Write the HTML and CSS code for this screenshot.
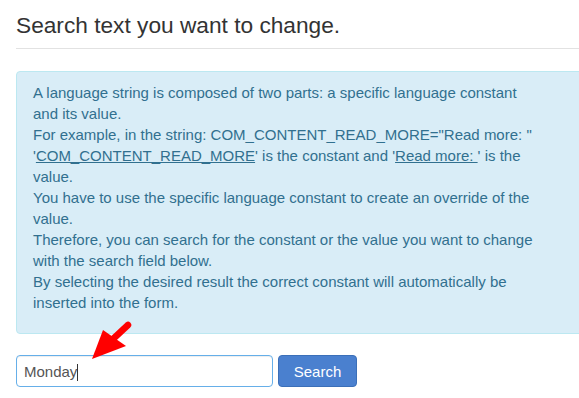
FILE: index.html
```html
<!DOCTYPE html>
<html lang="en">
<head>
    <meta charset="UTF-8">
    <meta name="viewport" content="width=device-width, initial-scale=1.0">
    <title>Override search</title>
    <link rel="stylesheet" href="styles.css">
</head>
<body>
    <div class="page">
        <h2 class="page-header">Search text you want to change.</h2>

        <div class="alert-info">
            A language string is composed of two parts: a specific language constant and its value.<br>
            For example, in the string: COM_CONTENT_READ_MORE="Read more: "<br>
            '<u>COM_CONTENT_READ_MORE</u>' is the constant and '<u>Read more:&nbsp;</u>' is the value.<br>
            You have to use the specific language constant to create an override of the value.<br>
            Therefore, you can search for the constant or the value you want to change with the search field below.<br>
            By selecting the desired result the correct constant will automatically be inserted into the form.
        </div>

        <form class="search-row">
            <div class="search-input">Monday<span class="caret"></span></div>
            <button type="button" class="btn-search">Search</button>
        </form>
    </div>

    <!-- red annotation arrow -->
    <svg class="arrow" width="60" height="50" viewBox="0 0 60 50">
        <line x1="39" y1="7" x2="24" y2="21" stroke="#f00" stroke-width="6.5" stroke-linecap="round"/>
        <polygon points="3,41 14,12 37,28" fill="#f00"/>
    </svg>
</body>
</html>
```

FILE: styles.css
```css
body {
    margin: 0;
    font-family: "Liberation Sans", Arial, sans-serif;
    color: #333;
    background: #fff;
    overflow: hidden;
}

.page {
    width: 600px;
    padding: 0 0 0 16px;
}

.page-header {
    margin: 0;
    padding: 13px 0 10px;
    font-size: 22.7px;
    font-weight: normal;
    line-height: 25px;
    color: #333;
    border-bottom: 1px solid #e2e2e2;
}

.alert-info {
    margin-top: 22px;
    padding: 10px 40px 20px 16px;
    width: 512px;
    font-size: 15px;
    line-height: 21px;
    color: #31708f;
    background-color: #d9edf7;
    border: 1px solid #bce8f1;
    border-radius: 4px;
}

.alert-info u {
    text-decoration: underline;
}

.search-row {
    display: flex;
    gap: 5px;
    margin-top: 21px;
}

.search-input {
    box-sizing: border-box;
    width: 257px;
    height: 32px;
    padding: 6px 7px;
    font-size: 15px;
    line-height: 19px;
    color: #555;
    border: 1px solid #66afe9;
    border-radius: 4px;
    box-shadow: inset 0 1px 1px rgba(0,0,0,.075);
}

.caret {
    display: inline-block;
    width: 1px;
    height: 17px;
    background: #333;
    vertical-align: -4px;
}

.btn-search {
    box-sizing: border-box;
    width: 79px;
    height: 32px;
    font-family: "Liberation Sans", Arial, sans-serif;
    font-size: 15px;
    color: #fff;
    background-color: #4a80cf;
    border: 1px solid #3b6fb8;
    border-radius: 4px;
}

.arrow {
    position: absolute;
    left: 89px;
    top: 318px;
}
```
